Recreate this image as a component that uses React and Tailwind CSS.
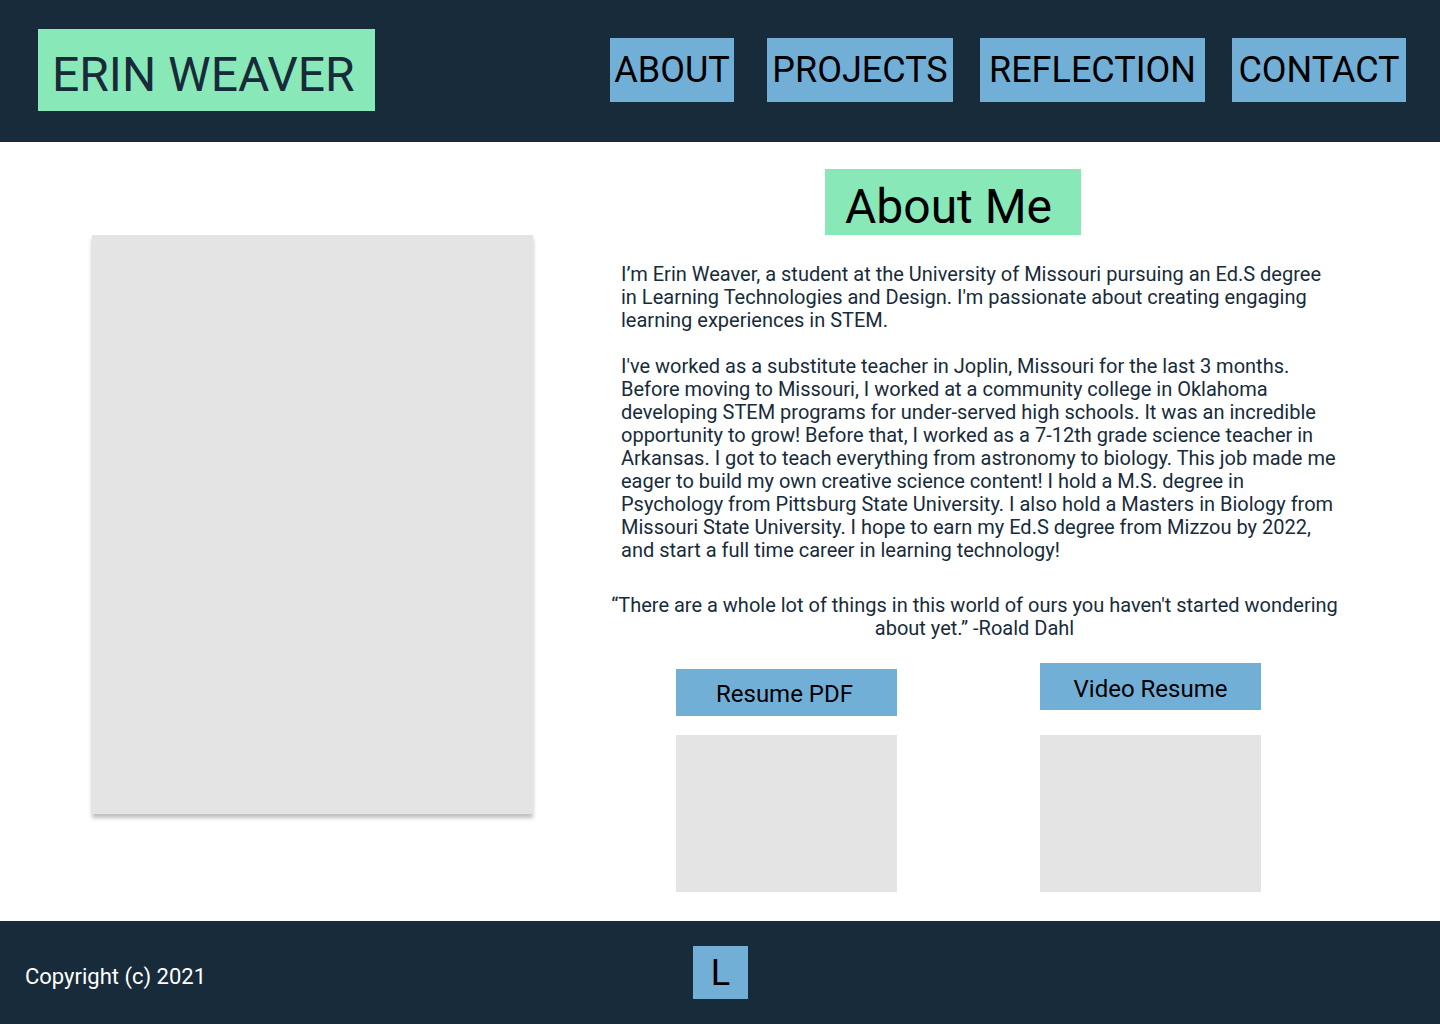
const nav = [
  { label: 'ABOUT', box: 'w-31' },
  { label: 'PROJECTS', box: 'w-[186px] ml-[33px]' },
  { label: 'REFLECTION', box: 'w-[225px] ml-[27px]' },
  { label: 'CONTACT', box: 'w-[174px] ml-[27px]' },
];

export default function App() {
  return (
    <div className="flex min-h-screen flex-col bg-white font-['Roboto',sans-serif] text-[#182b3a]">
      <header className="flex justify-between bg-[#182b3a] pt-[29px] pr-[34px] pb-[31px] pl-[38px]">
        <h1 className="flex h-[82px] w-[337px] items-center bg-[#88e8b7] pt-[10px] pl-[14px] text-5xl whitespace-nowrap">
          ERIN WEAVER
        </h1>
        <nav className="flex pt-[9px]">
          {nav.map((n) => (
            <a
              key={n.label}
              href={'#' + n.label.toLowerCase()}
              className={'flex h-16 items-center justify-center bg-[#72afd7] text-4xl whitespace-nowrap text-black ' + n.box}
            >
              {n.label}
            </a>
          ))}
        </nav>
      </header>

      <main className="flex flex-1 pr-[100px] pb-[29px] pl-[92px]">
        <div className="mt-[93px] h-[579px] w-[441px] shrink-0 bg-[#e4e4e4] shadow-[0_4px_4px_rgba(0,0,0,0.25)]" />
        <section className="ml-[76px] flex-1 pt-[27px]">
          <h2 className="ml-[216px] flex h-[66px] w-64 items-center bg-[#88e8b7] pt-[10px] pl-5 text-5xl whitespace-nowrap text-black">
            About Me
          </h2>
          <div className="mt-7 ml-3 text-xl leading-[23px]">
            <p>
              I’m Erin Weaver, a student at the University of Missouri pursuing an Ed.S degree in Learning Technologies
              and Design. I'm passionate about creating engaging learning experiences in STEM.
            </p>
            <p className="mt-[23px]">
              I've worked as a substitute teacher in Joplin, Missouri for the last 3 months. Before moving to Missouri, I
              worked at a community college in Oklahoma developing STEM programs for under-served high schools. It was an
              incredible opportunity to grow! Before that, I worked as a 7-12th grade science teacher in Arkansas. I got
              to teach everything from astronomy to biology. This job made me eager to build my own creative science
              content! I hold a M.S. degree in Psychology from Pittsburg State University. I also hold a Masters in
              Biology from Missouri State University. I hope to earn my Ed.S degree from Mizzou by 2022, and start a full
              time career in learning technology!
            </p>
          </div>
          <p className="mt-8 text-center text-xl leading-[23px]">
            “There are a whole lot of things in this world of ours you haven't started wondering about yet.” -Roald Dahl
          </p>
          <div className="mt-[23px] ml-[67px] flex gap-[143px]">
            <div className="pt-[6px]">
              <a href="#resume" className="flex h-[47px] w-[221px] items-center justify-center bg-[#72afd7] pt-[2px] pr-1 text-2xl text-black">
                Resume PDF
              </a>
              <div className="mt-[19px] h-[157px] bg-[#e4e4e4]" />
            </div>
            <div>
              <a href="#video" className="flex h-[47px] w-[221px] items-center justify-center bg-[#72afd7] pt-1 text-2xl text-black">
                Video Resume
              </a>
              <div className="mt-[25px] h-[157px] bg-[#e4e4e4]" />
            </div>
          </div>
        </section>
      </main>

      <footer className="grid grid-cols-[1fr_auto_1fr] bg-[#182b3a] pt-[25px] pb-[25px] pl-[25px] pr-[24px] text-white">
        <p className="self-center pt-2 text-[22px] leading-[26px]">Copyright (c) 2021</p>
        <a href="#linkedin" className="flex h-[53px] w-[55px] items-center justify-center bg-[#72afd7] text-4xl text-black">
          L
        </a>
      </footer>
    </div>
  );
}
